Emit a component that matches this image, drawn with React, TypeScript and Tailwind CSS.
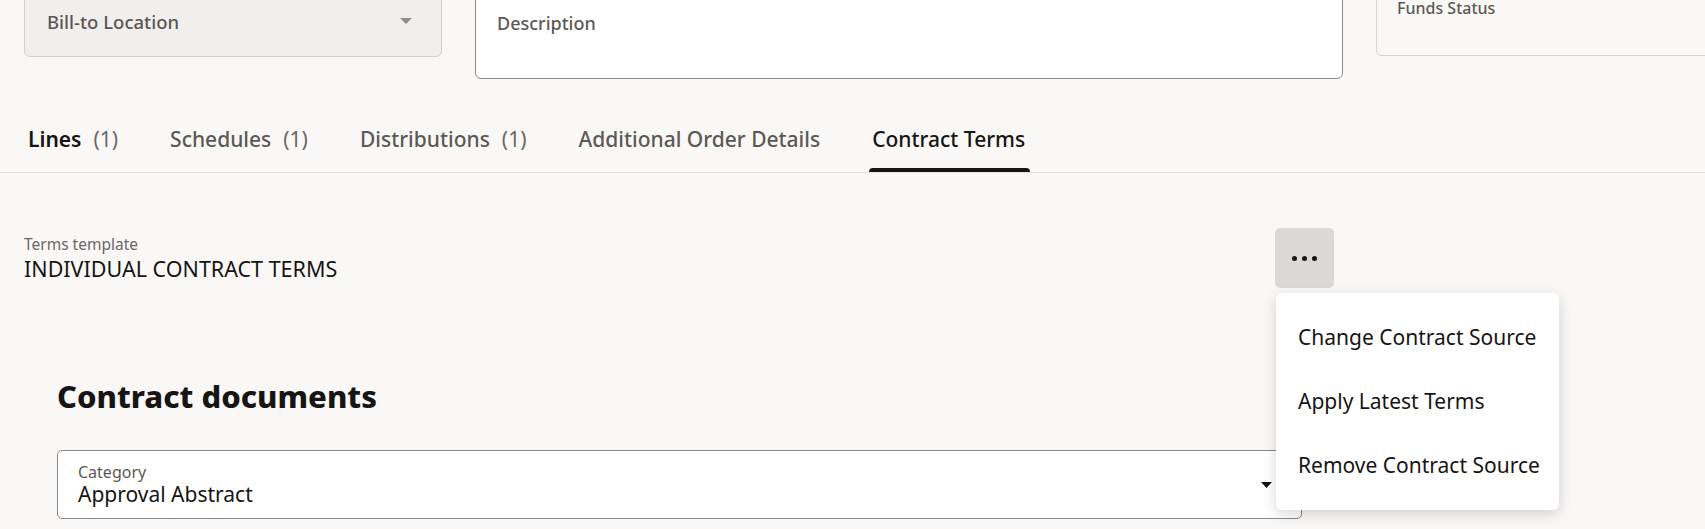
import React from "react";

const Caret = ({ color, w, h }: { color: string; w: number; h: number }) => (
  <svg width={w} height={h} viewBox={`0 0 ${w} ${h}`} className="shrink-0">
    <polygon points={`0,0 ${w},0 ${w / 2},${h}`} fill={color} />
  </svg>
);

export default function App() {
  return (
    <div
      className="relative w-[1705px] h-[529px] overflow-hidden bg-[#f9f8f6] text-[#161513]"
      style={{ fontFamily: '"Noto Sans", "Open Sans", sans-serif' }}
    >
      {/* top fields row (partly scrolled off) */}
      <div className="flex items-start gap-[33px] pl-[24px] -mt-[20px]">
        <div className="shrink-0 w-[418px] h-[77px] rounded-[6px] border border-[#d3d0cc] bg-[#f1efed] flex items-start justify-between pl-[22px] pr-[29px] pt-[29px]">
          <span className="text-[18.5px] leading-[24px] font-medium text-[#5a5652]">Bill-to Location</span>
          <span className="mt-[8px]">
            <Caret color="#8f8b87" w={12} h={6} />
          </span>
        </div>
        <div className="shrink-0 w-[868px] h-[99px] rounded-[6px] border border-[#8d8a87] bg-white pl-[21px] pt-[30px]">
          <span className="text-[18px] leading-[24px] font-medium text-[#5c5955]">Description</span>
        </div>
        <div className="shrink-0 w-[400px] h-[76px] rounded-[6px] border border-[#d8d5d1] pl-[20px] pt-[19px]">
          <div className="text-[16px] leading-[16px] font-medium text-[#5c5955]">Funds Status</div>
        </div>
      </div>

      {/* tabs */}
      <div className="mt-[26px] flex items-end gap-[52px] pl-[28px] border-b border-[#e2dfdb] h-[68px]">
        <div className="relative pt-[20px] pb-[19px] text-[21px] leading-[28px]">
          <span className="font-semibold text-[#161513]">Lines</span>
          <span className="ml-[12px] font-normal text-[#6b6865]">(1)</span>
        </div>
        <div className="relative pt-[20px] pb-[19px] text-[21px] leading-[28px]">
          <span className="font-medium text-[#5c5955]">Schedules</span>
          <span className="ml-[12px] font-normal text-[#6b6865]">(1)</span>
        </div>
        <div className="relative pt-[20px] pb-[19px] text-[21px] leading-[28px]">
          <span className="font-medium text-[#5c5955]">Distributions</span>
          <span className="ml-[12px] font-normal text-[#6b6865]">(1)</span>
        </div>
        <div className="relative pt-[20px] pb-[19px] text-[21px] leading-[28px] font-medium text-[#5c5955]">
          Additional Order Details
        </div>
        <div className="relative pt-[20px] pb-[19px] text-[21px] leading-[28px] font-medium text-[#161513]">
          Contract Terms
          <div className="absolute bottom-0 -left-[3px] -right-[5px] h-[4px] bg-[#161513] rounded-t-[4px]" />
        </div>
      </div>

      {/* terms template row */}
      <div className="mt-[55px] flex items-start justify-between w-[1334px] pl-[24px]">
        <div className="pt-[6px]">
          <div className="text-[15.5px] leading-[20px] text-[#6b6865]">Terms template</div>
          <div className="mt-[1px] text-[21.5px] leading-[28px] text-[#161513]">INDIVIDUAL CONTRACT TERMS</div>
        </div>
        <button className="w-[59px] h-[60px] rounded-[5px] bg-[#dbd9d6] flex items-center justify-center gap-[5px]">
          <span className="w-[5px] h-[5px] rounded-full bg-[#161513]" />
          <span className="w-[5px] h-[5px] rounded-full bg-[#161513]" />
          <span className="w-[5px] h-[5px] rounded-full bg-[#161513]" />
        </button>
      </div>

      {/* contract documents */}
      <div className="pl-[57px] mt-[89px]">
        <h2 className="text-[31px] leading-[38px] font-extrabold text-[#161513]">Contract documents</h2>
        <div className="mt-[35px] w-[1245px] h-[69px] rounded-[5px] border border-[#8b8987] bg-white flex items-center justify-between pl-[20px] pr-[29px]">
          <div className="self-start pt-[11px]">
            <div className="text-[16px] leading-[20px] text-[#5c5955]">Category</div>
            <div className="text-[21px] leading-[24px] text-[#161513]">Approval Abstract</div>
          </div>
          <Caret color="#161513" w={11} h={6} />
        </div>
      </div>

      {/* dropdown menu */}
      <div className="absolute left-[1276px] top-[293px] w-[283px] h-[217px] z-10 bg-white rounded-[6px] shadow-[0_4px_14px_rgba(0,0,0,0.16)] pt-[12px]">
        {["Change Contract Source", "Apply Latest Terms", "Remove Contract Source"].map((t) => (
          <div key={t} className="h-[64px] flex items-center pl-[22px] text-[21px] leading-[28px] text-[#161513]">
            {t}
          </div>
        ))}
      </div>
    </div>
  );
}
